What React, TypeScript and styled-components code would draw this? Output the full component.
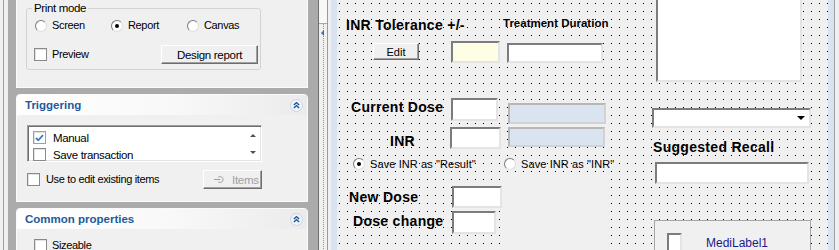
import React from 'react';
import styled, { createGlobalStyle } from 'styled-components';

const uiFont = `"Liberation Sans", Arial, sans-serif`;
const formFont = `"Liberation Sans", Arial, sans-serif`;

const GlobalStyle = createGlobalStyle`
  html, body { margin: 0; padding: 0; background: #f0f0f0; }
  body { overflow: hidden; font-family: ${formFont}; }
`;

const Screen = styled.div`
  display: flex;
  width: 839px;
  height: 250px;
  overflow: hidden;
  background: #f0f0f0;
`;

/* ---------- left property panel ---------- */

const LeftPane = styled.div`
  flex: none;
  width: 318px;
  box-sizing: border-box;
  padding: 0 10px 0 16px;
  display: flex;
  flex-direction: column;
  gap: 6px;
  background: linear-gradient(to right, #f0f0f0 0 3px, #a0a0a0 3px 4px, #f0f0f0 4px 8px, #ababab 8px);
  font-family: ${uiFont};
  font-size: 11px;
  letter-spacing: -0.35px;
  color: #000;
`;

const Section = styled.section<{ $cut?: boolean }>`
  flex: none;
  background: #f0f0f0;
  border: 1px solid #fbfbfb;
  border-top-width: ${p => (p.$cut ? 0 : 1)}px;
  border-radius: ${p => (p.$cut ? '0' : '4px 4px 0 0')};
`;

const SectionHeader = styled.header`
  height: 20px;
  display: flex;
  align-items: center;
  justify-content: space-between;
  padding: 0 4px 0 8px;
  border-radius: 3px 3px 0 0;
  background: linear-gradient(to right, #ffffff 0%, #f8f8f8 55%, #ebebeb 100%);
  color: #1d5a9a;
  font: bold 11.5px ${formFont};
  letter-spacing: 0;
`;

const SectionBody = styled.div<{ $pad: string }>`
  padding: ${p => p.$pad};
`;

const GroupBox = styled.div`
  position: relative;
  width: 235px;
  height: 62px;
  box-sizing: border-box;
  border: 1px solid #d3d3d3;
  border-radius: 3px;
  padding: 9px 2px 0 7px;
`;

const Legend = styled.span`
  position: absolute;
  top: -8px;
  left: 5px;
  padding: 0 2px;
  line-height: 14px;
  font-size: 11.5px;
  background: #f0f0f0;
`;

const RadioRow = styled.div`
  display: grid;
  grid-template-columns: repeat(3, 76px);
  height: 15px;
  align-items: center;
  padding-left: 1px;
`;

const ButtonRow = styled.div<{ $gap?: number; $w?: number }>`
  display: flex;
  justify-content: space-between;
  align-items: center;
  height: 19px;
  width: ${p => (p.$w ? `${p.$w}px` : 'auto')};
  margin-top: ${p => p.$gap ?? 0}px;
`;

const Option = styled.label<{ $gap?: number }>`
  display: flex;
  align-items: center;
  gap: ${p => p.$gap ?? 5}px;
  line-height: 13px;
  white-space: nowrap;
`;

const RadioDot = styled.span<{ $on?: boolean }>`
  position: relative;
  flex: none;
  width: 12px;
  height: 12px;
  box-sizing: border-box;
  border-radius: 50%;
  border: 1px solid;
  border-color: #7a7a7a #dedede #dedede #7a7a7a;
  background: #fff;
  &::after {
    content: '';
    display: ${p => (p.$on ? 'block' : 'none')};
    position: absolute;
    left: 3px;
    top: 3px;
    width: 4px;
    height: 4px;
    border-radius: 50%;
    background: #000;
  }
`;

const CheckBox = styled.span<{ $tint?: boolean }>`
  flex: none;
  width: 13px;
  height: 13px;
  box-sizing: border-box;
  border: 1px solid ${p => (p.$tint ? '#8ea3bd' : '#8a8a8a')};
  box-shadow: inset 1px 1px #e2e2e2;
  background: #fff;
  display: flex;
  align-items: center;
  justify-content: center;
`;

const PushButton = styled.button<{ $w: number; $dim?: boolean }>`
  width: ${p => p.$w}px;
  height: 19px;
  box-sizing: border-box;
  padding: 0;
  background: #f0f0f0;
  border: 1px solid;
  border-color: #ffffff #6d6d6d #6d6d6d #ffffff;
  box-shadow: inset -1px -1px #a0a0a0;
  font: 11.5px ${uiFont};
  letter-spacing: -0.3px;
  color: ${p => (p.$dim ? '#a0a0a0' : '#000')};
  display: flex;
  align-items: center;
  justify-content: ${p => (p.$dim ? 'flex-start' : 'center')};
  gap: 8px;
  padding-left: ${p => (p.$dim ? 10 : 0)}px;
`;

const ListBox = styled.div`
  width: 235px;
  height: 37px;
  box-sizing: border-box;
  border: 1px solid;
  border-color: #a0a0a0 #ffffff #ffffff #a0a0a0;
  box-shadow: inset 1px 1px #6d6d6d, inset -1px -1px #e3e3e3;
  background: #fff;
  display: flex;
  overflow: hidden;
`;

const ListItems = styled.div`
  flex: 1;
  padding: 3px 0 0 5px;
`;

const ListRow = styled.div`
  height: 17px;
  display: flex;
  align-items: center;
  gap: 7px;
  font-size: 11.5px;
`;

const ScrollArrows = styled.div`
  width: 16px;
  display: flex;
  flex-direction: column;
  justify-content: space-between;
  align-items: center;
  padding: 8px 0 7px;
  box-sizing: border-box;
`;

const Arrow = styled.span<{ $down?: boolean }>`
  width: 0;
  height: 0;
  border-left: 3px solid transparent;
  border-right: 3px solid transparent;
  ${p => (p.$down ? 'border-top: 3px solid #505050;' : 'border-bottom: 3px solid #505050;')}
`;

/* ---------- splitter ---------- */

const Splitter = styled.div`
  position: relative;
  flex: none;
  width: 9px;
  box-sizing: border-box;
  border-left: 1px solid #6f6f6f;
  background: #f0f0f0;
  display: flex;
  flex-direction: column;
  align-items: center;
`;

const SplitThumb = styled.div`
  width: 100%;
  height: 24px;
  flex: none;
  box-sizing: border-box;
  background: #f8f8f8;
  border-bottom: 1px solid #a8a8a8;
`;

const SplitDots = styled.div`
  flex: 1;
  width: 1px;
  background: repeating-linear-gradient(to bottom, #8597b0 0 1px, transparent 1px 2px);
`;

const SplitArrow = styled.span`
  position: absolute;
  top: 30px;
  left: 2px;
  width: 0;
  height: 0;
  border-top: 3px solid transparent;
  border-bottom: 3px solid transparent;
  border-right: 3px solid #3c6ea8;
`;

/* ---------- form designer ---------- */

const CanvasFrame = styled.div`
  flex: 1;
  display: flex;
  border-left: 1px solid #9a9a9a;
  padding-left: 3px;
  background: #f0f0f0;
`;

const BlueStrip = styled.div`
  flex: none;
  width: 6px;
  background: #d7e3f0;
`;

const FrameTail = styled.div`
  flex: 1;
  border-left: 1px solid #a0a0a0;
  background: #f0f0f0;
`;

const DesignCanvas = styled.div`
  position: relative;
  flex: none;
  width: 491px;
  overflow: hidden;
  background-color: #f0f0f0;
  background-image: conic-gradient(from 270deg at 1px 1px, #000 90deg, transparent 0);
  background-size: 8px 8px;
  background-position: 2px 3px;
  font-family: ${formFont};
`;

const FormLabel = styled.div<{ $x: number; $y: number; $size?: number }>`
  position: absolute;
  left: ${p => p.$x}px;
  top: ${p => p.$y}px;
  font-weight: bold;
  font-size: ${p => p.$size ?? 14}px;
  line-height: 16px;
  letter-spacing: ${p => (p.$size ? 0 : 0.3)}px;
  white-space: nowrap;
  color: #000;
`;

const Placed = styled.div<{ $x: number; $y: number; $w: number; $h: number }>`
  position: absolute;
  left: ${p => p.$x}px;
  top: ${p => p.$y}px;
  width: ${p => p.$w}px;
  height: ${p => p.$h}px;
  box-sizing: border-box;
`;

const EditBox = styled(Placed)<{ $bg?: string }>`
  background: ${p => p.$bg ?? '#fff'};
  border: 2px solid;
  border-color: #7c7c7c #e4e4e4 #e4e4e4 #7c7c7c;
`;

const InfoBox = styled(Placed)`
  background: #dae4f0;
  border: 2px solid;
  border-color: #b8b8b8 #d2d2d2 #d2d2d2 #b8b8b8;
`;

const FormButton = styled(Placed)`
  background: #f0f0f0;
  border: 1px solid;
  border-color: #ffffff #6d6d6d #6d6d6d #ffffff;
  box-shadow: inset -1px -1px #a0a0a0;
  font-size: 11px;
  display: flex;
  align-items: center;
  justify-content: center;
`;

const ComboBox = styled(EditBox)`
  display: flex;
  align-items: center;
  justify-content: flex-end;
  padding-right: 4px;
`;

const ComboArrow = styled.span`
  width: 0;
  height: 0;
  border-left: 4px solid transparent;
  border-right: 4px solid transparent;
  border-top: 4px solid #000;
`;

const FlatPanel = styled(Placed)`
  background: #f0f0f0;
`;

const FramedPanel = styled(Placed)`
  background: #f0f0f0;
  border: 1px solid #a6a6a6;
`;

const FormRadio = styled.label<{ $x: number; $y: number }>`
  position: absolute;
  left: ${p => p.$x}px;
  top: ${p => p.$y}px;
  display: flex;
  align-items: center;
  gap: 5px;
  font-size: 11px;
  letter-spacing: 0.1px;
  white-space: nowrap;
`;

const PanelCaption = styled.span`
  position: absolute;
  left: 51px;
  top: 15px;
  font-size: 12px;
  line-height: 14px;
  color: #1a1a8a;
`;

const CollapseIcon = () => (
  <svg width="13" height="13" viewBox="0 0 13 13">
    <circle cx="6.5" cy="6.5" r="6" fill="#eef4fb" stroke="#c6d5e6" />
    <path d="M3.9 6.1 L6.5 3.6 L9.1 6.1 M3.9 9.1 L6.5 6.6 L9.1 9.1" fill="none" stroke="#1f4f8f" strokeWidth="1.4" />
  </svg>
);

const CheckMark = () => (
  <svg width="9" height="8" viewBox="0 0 9 8">
    <path d="M1 4 L3.3 6.3 L8 1.2" fill="none" stroke="#3d78c4" strokeWidth="1.8" />
  </svg>
);

const ItemsIcon = () => (
  <svg width="10" height="9" viewBox="0 0 10 9">
    <path d="M0 4.5 H6.5" stroke="#a0a0a0" strokeWidth="1" />
    <path d="M4.2 2.2 A3 3 0 1 1 4.2 6.8" fill="none" stroke="#a0a0a0" strokeWidth="1" />
  </svg>
);

export default function App() {
  return (
    <>
      <GlobalStyle />
      <Screen>
        <LeftPane>
          <Section $cut>
            <SectionBody $pad="8px 0 17px 9px">
              <GroupBox>
                <Legend>Print mode</Legend>
                <RadioRow>
                  <Option><RadioDot />Screen</Option>
                  <Option><RadioDot $on />Report</Option>
                  <Option><RadioDot />Canvas</Option>
                </RadioRow>
                <ButtonRow $gap={12}>
                  <Option><CheckBox />Preview</Option>
                  <PushButton $w={97}>Design report</PushButton>
                </ButtonRow>
              </GroupBox>
            </SectionBody>
          </Section>

          <Section>
            <SectionHeader>
              Triggering
              <CollapseIcon />
            </SectionHeader>
            <SectionBody $pad="10px 0 12px 10px">
              <ListBox>
                <ListItems>
                  <ListRow><CheckBox $tint><CheckMark /></CheckBox>Manual</ListRow>
                  <ListRow><CheckBox />Save transaction</ListRow>
                </ListItems>
                <ScrollArrows>
                  <Arrow />
                  <Arrow $down />
                </ScrollArrows>
              </ListBox>
              <ButtonRow $gap={8} $w={235}>
                <Option $gap={6}><CheckBox />Use to edit existing items</Option>
                <PushButton $w={59} $dim><ItemsIcon />Items</PushButton>
              </ButtonRow>
            </SectionBody>
          </Section>

          <Section>
            <SectionHeader>
              Common properties
              <CollapseIcon />
            </SectionHeader>
            <SectionBody $pad="10px 0 0 17px">
              <Option><CheckBox />Sizeable</Option>
            </SectionBody>
          </Section>
        </LeftPane>

        <Splitter>
          <SplitThumb />
          <SplitDots />
          <SplitArrow />
        </Splitter>

        <CanvasFrame>
          <BlueStrip />
          <DesignCanvas>
            <FormLabel $x={9} $y={17}>INR Tolerance +/-</FormLabel>
            <FormLabel $x={166} $y={15} $size={11.5}>Treatment Duration</FormLabel>
            <FormButton $x={36} $y={43} $w={46} $h={17}>Edit</FormButton>
            <EditBox $x={114} $y={41} $w={49} $h={22} $bg="#fefee4" />
            <EditBox $x={170} $y={43} $w={96} $h={20} />

            <FormLabel $x={14} $y={99}>Current Dose</FormLabel>
            <EditBox $x={114} $y={98} $w={47} $h={23} />
            <InfoBox $x={171} $y={103} $w={98} $h={21} />

            <FormLabel $x={53} $y={133}>INR</FormLabel>
            <EditBox $x={113} $y={127} $w={51} $h={22} />
            <InfoBox $x={171} $y={127} $w={97} $h={20} />

            <FormRadio $x={16} $y={158}><RadioDot $on />Save INR as "Result"</FormRadio>
            <FormRadio $x={167} $y={158}><RadioDot />Save INR as "INR"</FormRadio>

            <FlatPanel $x={170} $y={177} $w={101} $h={80} />
            <FormLabel $x={12} $y={189}>New Dose</FormLabel>
            <EditBox $x={115} $y={186} $w={50} $h={22} />
            <FormLabel $x={16} $y={213}>Dose change</FormLabel>
            <EditBox $x={115} $y={211} $w={44} $h={23} />

            <EditBox $x={319} $y={-4} $w={146} $h={86} />
            <ComboBox $x={315} $y={108} $w={159} $h={20}><ComboArrow /></ComboBox>
            <FormLabel $x={316} $y={139}>Suggested Recall</FormLabel>
            <EditBox $x={318} $y={162} $w={154} $h={22} />

            <FramedPanel $x={317} $y={220} $w={157} $h={40}>
              <EditBox $x={12} $y={12} $w={15} $h={30} />
              <PanelCaption>MediLabel1</PanelCaption>
            </FramedPanel>
          </DesignCanvas>
          <BlueStrip />
          <FrameTail />
        </CanvasFrame>
      </Screen>
    </>
  );
}
